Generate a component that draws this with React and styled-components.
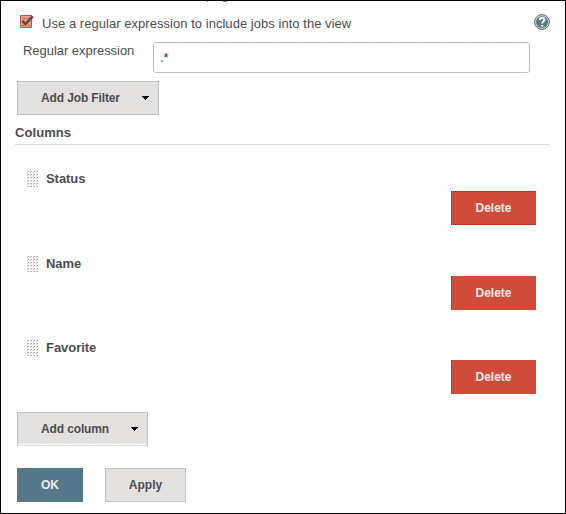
import React from "react";
import styled, { createGlobalStyle } from "styled-components";

const GlobalStyle = createGlobalStyle`
  * { box-sizing: border-box; }
  body { margin: 0; background: #fff; }
`;

const Frame = styled.main`
  width: 566px;
  height: 514px;
  border: 1px solid #000;
  background: #fff;
  overflow: hidden;
  color: #4d4d50;
  font: 13px/16px "Liberation Sans", Arial, sans-serif;
`;

const ClippedLine = styled.svg`
  display: block;
  width: 24px;
  height: 1px;
  margin-left: 204px;
`;

const OptionRow = styled.div`
  display: flex;
  align-items: flex-start;
  height: 40px;
  padding: 12px 15px 0 18px;
`;

const OptionLabel = styled.label`
  display: flex;
  flex: 1;
  gap: 8px;
  white-space: nowrap;
`;

const CheckIcon = styled.svg`
  width: 15px;
  height: 15px;
`;

const LabelText = styled.span`
  padding-top: 2px;
  letter-spacing: 0.04px;
`;

const HelpIcon = styled.svg`
  width: 16px;
  height: 16px;
`;

const FieldRow = styled.div`
  display: flex;
  height: 31px;
  padding-left: 22px;
`;

const FieldLabel = styled.label`
  width: 130px;
  padding-top: 1px;
  letter-spacing: -0.04px;
`;

const TextInput = styled.input`
  width: 377px;
  height: 31px;
  padding: 0 6px;
  border: 1px solid #bfbfbf;
  border-radius: 3px;
  outline: none;
  background: repeating-linear-gradient(90deg, #ddd 0 1px, #fff 1px 3px) 0 0 / 100% 1px no-repeat #fff;
  color: #333;
  font: 13px "Liberation Sans", Arial, sans-serif;
`;

const Button = styled.button`
  display: flex;
  align-items: center;
  justify-content: center;
  width: ${(p) => p.$width}px;
  height: 34px;
  padding: 0;
  border: 1px solid #bfc2c4;
  border-radius: 0;
  background: #e2e1e0;
  color: #4d4d50;
  font: bold 12px/16px "Liberation Sans", Arial, sans-serif;
`;

const PrimaryButton = styled(Button)`
  border-color: #56788b;
  background: #56788b;
  color: #ecebea;
`;

const DeleteButton = styled(Button)`
  padding-right: 1px;
  border: 0;
  border-left: 1px dotted #6b3b36;
  ${(p) => p.$outlined && "border-top: 1px dotted #6b3b36; border-bottom: 1px dotted #6b3b36;"}
  background: #d14b39;
  color: #ecebea;
`;

const MenuButton = styled(Button)`
  justify-content: space-between;
  padding: 0 8px 0 23px;
  letter-spacing: -0.13px;
  ${(p) =>
    p.$dotted &&
    `
    padding-bottom: 1px;
    border-bottom: 0;
    background:
      repeating-linear-gradient(90deg, #fff 0 1px, #e2e1e0 1px 3px) 0 30px / 100% 1px no-repeat,
      repeating-linear-gradient(90deg, #e2e1e0 0 1px, #fff 1px 3px) 0 31px / 100% 1px no-repeat,
      #e2e1e0;
  `}
`;

const Caret = styled.svg`
  width: 8px;
  height: 4px;
`;

const FilterBar = styled.div`
  padding: 8px 0 0 16px;
`;

const SectionTitle = styled.h2`
  width: 535px;
  height: 20px;
  margin: 10px 0 0 14px;
  border-bottom: 1px solid #dcdcdc;
  color: #4d4d50;
  font: bold 13px/16px "Liberation Sans", Arial, sans-serif;
  letter-spacing: 0.08px;
`;

const ColumnList = styled.div`
  display: grid;
  grid-template-rows: 85px 84px 54px;
  padding: 26px 29px 0 26px;
`;

const ColumnItem = styled.section`
  display: flex;
  flex-direction: column;
`;

const ColumnHeader = styled.header`
  display: flex;
  flex: none;
  gap: 8px;
  height: 20px;
  font-weight: bold;
  letter-spacing: -0.05px;
`;

const Grip = styled.svg`
  width: 11px;
  height: 16px;
`;

const ColumnActions = styled.div`
  display: flex;
  justify-content: flex-end;
`;

const AddColumnBar = styled.div`
  padding: 18px 0 0 16px;
`;

const Actions = styled.footer`
  display: flex;
  gap: 22px;
  padding: 22px 0 0 16px;
`;

const columns = ["Status", "Name", "Favorite"];
const gripRows = [0, 3, 6, 9, 12, 15];
const gripCols = [0, 3, 6, 9];

function DownCaret() {
  return (
    <Caret viewBox="0 0 8 4" shapeRendering="crispEdges">
      <path d="M0 0h7v1h-1v1h-1v1h-1v1h-1v-1h-1v-1h-1v-1h-1z" fill="#000" />
    </Caret>
  );
}

function DragGrip() {
  return (
    <Grip viewBox="0 0 11 16" shapeRendering="crispEdges">
      {gripRows.map((y) =>
        gripCols.map((x) => (
          <g key={`${x}-${y}`}>
            <rect x={x + 1} y={y} width="1" height="1" fill="#a9a5a3" />
            <rect x={x} y={y + 1} width="1" height="1" fill="#ccc9c6" />
            <rect x={x} y={y} width="1" height="1" fill="#d2d0ce" />
          </g>
        ))
      )}
    </Grip>
  );
}

export default function App() {
  return (
    <>
      <GlobalStyle />
      <Frame>
        <ClippedLine viewBox="0 0 24 1" shapeRendering="crispEdges">
          <path d="M2 0h1v1h-1zM18 0h4v1h-4z" fill="#777" />
        </ClippedLine>
        <OptionRow>
          <OptionLabel>
            <CheckIcon viewBox="0 -1 15 15">
              <path d="M1.5 .5h11v12h-11z" fill="#d8a397" stroke="#d14b39" />
              <path d="M4 3h2v1H4zM7 3h2v1H7zM3 10h2v1H3zM9 10h2v1H9z" fill="#d14b39" />
              <path d="M3.5 6l3 3L13.5 1.5" fill="none" stroke="#d14b39" strokeWidth="3" />
              <path d="M3.5 5.7l3 3.5 7.3-7.9" fill="none" stroke="#4d4542" strokeWidth="1.5" />
            </CheckIcon>
            <LabelText>Use a regular expression to include jobs into the view</LabelText>
          </OptionLabel>
          <HelpIcon viewBox="0 0 16 16">
            <circle cx="8" cy="8" r="7.4" fill="#e2e1e0" stroke="#555e65" />
            <circle cx="8" cy="8" r="6" fill="#56788b" />
            <path d="M5.8 6c0-3 4.8-2.8 4.5 0C10.1 7.7 8.2 7.5 8.2 9.5M8.2 11v1.8" fill="none" stroke="#f5f5f5" strokeWidth="2.1" />
          </HelpIcon>
        </OptionRow>
        <FieldRow>
          <FieldLabel htmlFor="expression">Regular expression</FieldLabel>
          <TextInput id="expression" defaultValue=".*" />
        </FieldRow>
        <FilterBar>
          <MenuButton $width={142}>
            Add Job Filter
            <DownCaret />
          </MenuButton>
        </FilterBar>
        <SectionTitle>Columns</SectionTitle>
        <ColumnList>
          {columns.map((name, index) => (
            <ColumnItem key={name}>
              <ColumnHeader>
                <DragGrip />
                {name}
              </ColumnHeader>
              <ColumnActions>
                <DeleteButton $width={85} $outlined={index === 0}>
                  Delete
                </DeleteButton>
              </ColumnActions>
            </ColumnItem>
          ))}
        </ColumnList>
        <AddColumnBar>
          <MenuButton $width={131} $dotted>
            Add column
            <DownCaret />
          </MenuButton>
        </AddColumnBar>
        <Actions>
          <PrimaryButton $width={66}>OK</PrimaryButton>
          <Button $width={81}>Apply</Button>
        </Actions>
      </Frame>
    </>
  );
}
